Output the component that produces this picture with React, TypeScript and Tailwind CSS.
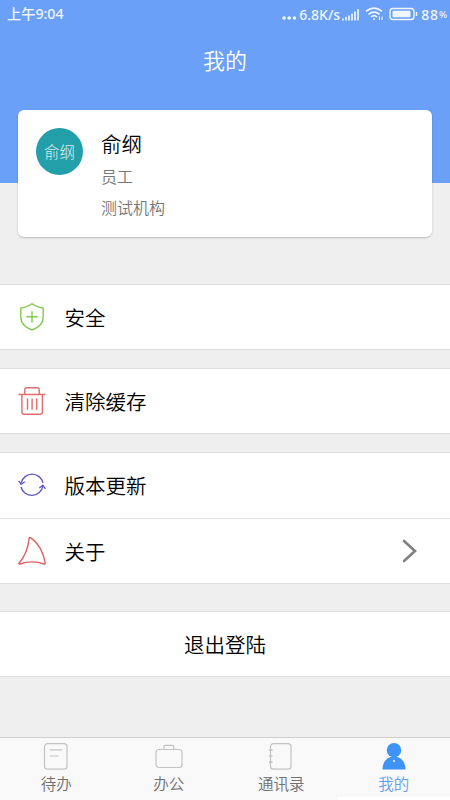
import type { ReactNode } from "react";

function ShieldIcon() {
  return (
    <svg width="28" height="28" viewBox="0 0 28 28" fill="none" stroke="#7ecb4a" strokeWidth="1.4">
      <path d="M14 .8C11 3 6.8 4.8 2.8 5.3V14C2.8 20.5 8 25 14 27C20 25 25.2 20.5 25.2 14V5.3C21.2 4.8 17 3 14 .8Z" strokeLinejoin="round" />
      <path d="M14 8.2V19.5M8.3 13.8H19.7" />
    </svg>
  );
}

function TrashIcon() {
  return (
    <svg width="28" height="28" viewBox="0 0 28 28" fill="none" stroke="#e26c6c" strokeWidth="1.4">
      <path d="M.5 7.5H27.5M6.8 7.5V2.5Q6.8.8 8.5.8H19.5Q21.2.8 21.2 2.5V7.5" />
      <path d="M3.9 7.5V25Q3.9 27.2 6.1 27.2H22.2Q24.4 27.2 24.4 25V7.5" />
      <path d="M9.5 11.5V22.8M14.1 11.5V22.8M18.7 11.5V22.8" />
    </svg>
  );
}

function RefreshIcon() {
  return (
    <svg width="28" height="28" viewBox="0 0 28 28" fill="none" stroke="#5d59c8" strokeWidth="1.4">
      <path d="M3.2 11.8A11.2 11.2 0 0 1 25 11.8M3 16A11.2 11.2 0 0 0 24.9 15" />
      <path d="M.7 9.9L3.1 13.3L6.8 10.7M21.3 17L24.9 14.2L27.4 17.900" />
    </svg>
  );
}

function SailIcon() {
  return (
    <svg width="28" height="28" viewBox="0 0 28 28" fill="none" stroke="#de6262" strokeWidth="1.4" strokeLinejoin="round">
      <path d="M11.2 .9C10.2 11 6.8 19.8 .8 26.5C1 27 1.500 27.2 2.2 27C9 24.2 19 24.2 26 27Q27.3 27.2 27.2 26.2C25.5 15.6 20.5 6.5 13 .9Q11.7 0 11.2 .9Z" />
    </svg>
  );
}

function Row({ icon, label, arrow = false }: { icon: ReactNode; label: string; arrow?: boolean }) {
  return (
    <div className="flex h-16 items-center pl-[18px] pr-[33px]">
      {icon}
      <span className="ml-[18.5px] flex-1 text-[20.5px] leading-7 text-black">{label}</span>
      {arrow && (
        <svg width="15" height="24" viewBox="0 0 15 24" fill="none" stroke="#808080" strokeWidth="2.6">
          <path d="M2 2L13 12L2 22" strokeLinecap="round" />
        </svg>
      )}
    </div>
  );
}

function StatusBar() {
  return (
    <div className="flex h-7 items-center pl-[7px] pr-[3px] font-['Noto_Sans','Noto_Sans_CJK_SC',sans-serif] text-[13.5px] font-medium text-white/90">
      <span className="flex-1 text-[14.2px]">上午9:04</span>
      <svg className="mr-[2px] mt-[7px]" width="15" height="4" fill="currentColor">
        <circle cx="2" cy="2" r="1.8" />
        <circle cx="7.2" cy="2" r="1.8" />
        <circle cx="12.4" cy="2" r="1.8" />
      </svg>
      <span className="w-[43px] whitespace-nowrap text-[14px]">6.8K/s</span>
      <svg width="17" height="13" stroke="currentColor" strokeWidth="1.7">
        <path d="M1 12.5V10.5M4 12.5V9M7 12.5V7.5M10 12.5V5.5M13 12.5V3.5M16 12.5V1" />
      </svg>
      <svg className="ml-[6px]" width="19" height="14" viewBox="0 0 19 14" fill="none" stroke="currentColor" strokeWidth="1.6">
        <path d="M1 4.3Q9 -2.2 17 4.3M3.5 7.3Q9 2.8 14.5 7.3M6 10Q9 7.4 12 10" />
        <circle cx="9" cy="12" r="1" fill="currentColor" stroke="none" />
        <path d="M14.5 9.5V13M17 9.5V13" strokeWidth="1.1" />
      </svg>
      <svg className="ml-[5px]" width="29" height="14" viewBox="0 0 29 14" fill="none">
        <rect x="1" y="1.5" width="24" height="11" rx="3" stroke="currentColor" strokeWidth="1.4" />
        <rect x="3.5" y="3.7" width="18" height="6.6" rx="1" fill="currentColor" />
        <path d="M27.5 5V9" stroke="currentColor" strokeWidth="1.5" />
      </svg>
      <span className="ml-[3px] tracking-[0.8px] text-[14px]">88</span>
      <span className="mt-[3px] text-[9.5px]">%</span>
    </div>
  );
}

const tabs = [
  {
    label: "待办",
    icon: (
      <>
        <rect x="2.5" y=".7" width="22.5" height="25.5" rx="3" />
        <path d="M8 6.8H20M8 13H16.5" />
      </>
    ),
  },
  {
    label: "办公",
    icon: (
      <>
        <rect x="1" y="6.5" width="26" height="18" rx="3" />
        <path d="M9 6.5V3.7Q9 2.4 10.3 2.4H17.5Q18.8 2.4 18.8 3.7V6.5" />
      </>
    ),
  },
  {
    label: "通讯录",
    icon: (
      <>
        <rect x="3.5" y=".7" width="20.5" height="25.5" rx="3" />
        <path d="M2 7H5.5M2 13.1H5.5M2 19.2H5.5" strokeWidth="1.4" />
      </>
    ),
  },
  {
    label: "我的",
    icon: (
      <g fill="#3f93f6" stroke="none">
        <circle cx="14" cy="7.2" r="7.2" />
        <path d="M2.5 26.5C2.5 19 7 13.5 14 13.5C21 13.5 25.5 19 25.5 26.5Z" />
        <circle cx="14" cy="18" r="1" fill="#ffffff" />
      </g>
    ),
  },
];

export default function App() {
  return (
    <div className="relative flex h-[800px] w-[450px] flex-col overflow-hidden bg-[#efefef] font-['Noto_Sans_CJK_SC',sans-serif] font-[350]">
      <header className="h-[183px] shrink-0 bg-[#6aa0f7]">
        <StatusBar />
        <h1 className="mt-[15px] text-center text-[22px] leading-8 text-white">我的</h1>
      </header>

      <section className="mx-[18px] -mt-[73px] flex h-[127px] shrink-0 rounded-md bg-white pl-[18px] pt-[18px] shadow-[0_1px_2px_rgba(0,0,0,0.22)]">
        <div className="flex size-[47px] items-center justify-center rounded-full bg-[#229fa8] text-[15.5px] font-light text-white/85">
          俞纲
        </div>
        <div className="ml-[18px] text-[16px] leading-[31px] text-[#777777]">
          <p className="text-[20.5px] leading-[30px] text-black">俞纲</p>
          <p className="mt-[3px]">员工</p>
          <p>测试机构</p>
        </div>
      </section>

      <main className="mt-[47px] flex-1">
        <div className="border-y border-[#dedede] bg-white">
          <Row icon={<ShieldIcon />} label="安全" />
        </div>
        <div className="mt-[18px] border-y border-[#dedede] bg-white">
          <Row icon={<TrashIcon />} label="清除缓存" />
        </div>
        <div className="mt-[18px] border-y border-[#dedede] bg-white">
          <Row icon={<RefreshIcon />} label="版本更新" />
          <div className="mt-px h-px bg-[#e2e2e2]" />
          <Row icon={<SailIcon />} label="关于" arrow />
        </div>
        <button className="mt-[27px] block h-[66px] w-full border-y border-[#dedede] bg-white text-[20.5px] text-black">
          退出登陆
        </button>
      </main>

      <nav className="grid h-[63px] shrink-0 grid-cols-4 border-t border-[#cfcfcf] bg-[#f9f9f9] pt-[5px]">
        {tabs.map((tab, i) => (
          <div
            key={tab.label}
            className={`flex flex-col items-center text-[15.5px] leading-[27px] ${i === 3 ? "text-[#669cef]" : "text-[#707070]"}`}
          >
            <svg className="shrink-0" width="28" height="27" viewBox="0 0 28 27" fill="none" stroke="#c3c3c3" strokeWidth="1.2">
              {tab.icon}
            </svg>
            <span>{tab.label}</span>
          </div>
        ))}
      </nav>
      {/* light edge along the bottom right of the tab bar */}
      <div className="absolute bottom-0 right-0 h-[3px] w-[113px] bg-white" />
    </div>
  );
}
